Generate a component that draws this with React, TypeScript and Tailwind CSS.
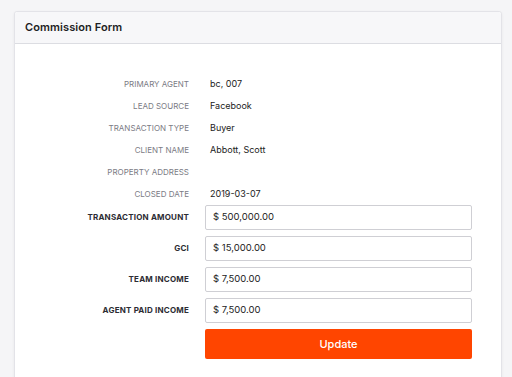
import React from "react";

const info = [
  ["Primary Agent", "bc, 007"],
  ["Lead Source", "Facebook"],
  ["Transaction Type", "Buyer"],
  ["Client Name", "Abbott, Scott"],
  ["Property Address", ""],
  ["Closed Date", "2019-03-07"],
];

const amounts = [
  ["Transaction Amount", "$ 500,000.00"],
  ["GCI", "$ 15,000.00"],
  ["Team Income", "$ 7,500.00"],
  ["Agent Paid Income", "$ 7,500.00"],
];

export default function App() {
  return (
    <div
      className="min-h-[377px] bg-[#f5f5f7] pt-[11px] pl-[14px] pr-[10px] overflow-hidden"
      style={{ fontFamily: "Inter, 'Noto Sans', sans-serif" }}
    >
      <div className="rounded-[3px] border border-[#e3e3e8] bg-white shadow-[0_1px_3px_rgba(0,0,0,0.06)] h-[380px]">
        <div className="h-[32px] flex items-center px-[10px] bg-[#f7f7f9] border-b border-[#dcdde2] rounded-t-[3px]">
          <h2 className="text-[11px] font-semibold text-[#1e1e24] tracking-[0.1px]">Commission Form</h2>
        </div>

        <div className="pt-[29px]">
          {info.map(([label, value]) => (
            <div key={label} className="flex h-[22px] items-center">
              <div className="w-[174px] text-right text-[8px] uppercase text-[#7b7b84]">
                {label}
              </div>
              <div className="ml-[21px] text-[9px] text-[#222]">{value}</div>
            </div>
          ))}

          <div className="flex flex-col gap-[6px]">
            {amounts.map(([label, value]) => (
              <div key={label} className="flex">
                <div className="w-[174px] pt-[6px] text-right text-[8px] font-bold uppercase tracking-[0.2px] text-[#2c2c33]">
                  {label}
                </div>
                <div className="ml-[16px] w-[267px] h-[25px] rounded-[2px] border border-[#cfcfd4] bg-white flex items-center px-[7px] text-[9.5px] text-[#222]">
                  {value}
                </div>
              </div>
            ))}
            <div className="flex">
              <div className="w-[174px]" />
              <button
                type="button"
                className="ml-[16px] w-[267px] h-[30px] rounded-[2px] bg-[#ff4500] text-white text-[11px] font-medium"
              >
                Update
              </button>
            </div>
          </div>
        </div>
      </div>
    </div>
  );
}
